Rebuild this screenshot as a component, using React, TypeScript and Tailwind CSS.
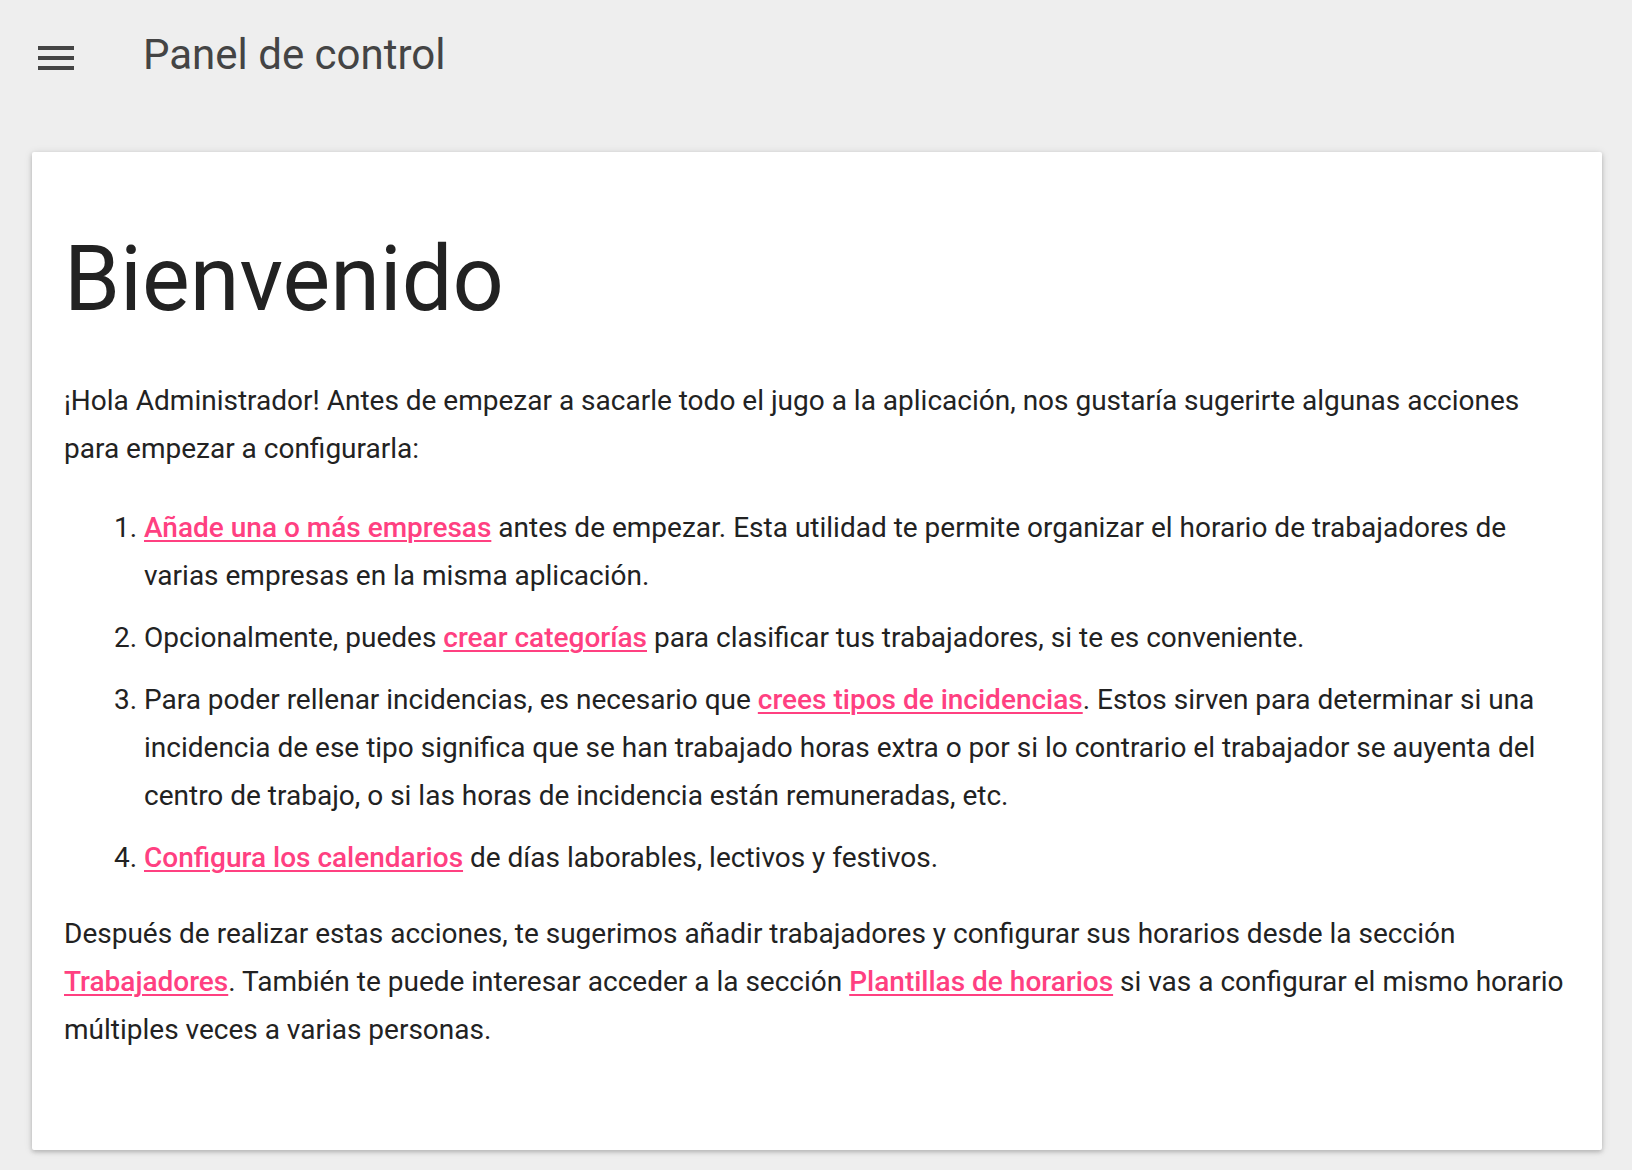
import React from 'react';

const Link = ({ children }: { children: React.ReactNode }) => (
    <a href="#" className="text-[#ff4081] font-medium underline decoration-2 underline-offset-[3px]">
        {children}
    </a>
);

export default function App() {
    return (
        <div className="min-h-[1170px] bg-[#eeeeee] pb-[21px] font-['Roboto',sans-serif] text-[#222222]">
            {/* Top bar */}
            <header className="flex items-start pl-[32px] pt-[31px] h-[152px]">
                <button className="mt-[3px] w-[48px] h-[48px] flex items-center justify-center text-[#444444]">
                    <svg width="48" height="48" viewBox="0 0 48 48" fill="currentColor">
                        <rect x="6" y="12" width="36" height="4" />
                        <rect x="6" y="22" width="36" height="4" />
                        <rect x="6" y="32" width="36" height="4" />
                    </svg>
                </button>
                <h1 className="ml-[63px] text-[42px] leading-[48px] font-normal text-[#444444]">Panel de control</h1>
            </header>

            {/* Welcome card */}
            <main className="ml-[32px] mr-[30px] bg-white rounded-[2px] shadow-[0_2px_4px_rgba(0,0,0,0.18),0_1px_8px_rgba(0,0,0,0.12)] px-[32px] pt-[72px] pb-[96px]">
                <h2 className="text-[90px] leading-[112px] font-normal">Bienvenido</h2>

                <div className="mt-[41px] text-[28px] leading-[48px]">
                    <p>
                        ¡Hola Administrador! Antes de empezar a sacarle todo el jugo a la aplicación, nos gustaría sugerirte algunas acciones para empezar a configurarla:
                    </p>

                    <ol className="list-decimal pl-[80px] mt-[31px] mb-[28px] flex flex-col gap-[14px]">
                        <li>
                            <Link>Añade una o más empresas</Link> antes de empezar. Esta utilidad te permite organizar el horario de trabajadores de varias empresas en la misma aplicación.
                        </li>
                        <li>
                            Opcionalmente, puedes <Link>crear categorías</Link> para clasificar tus trabajadores, si te es conveniente.
                        </li>
                        <li>
                            Para poder rellenar incidencias, es necesario que <Link>crees tipos de incidencias</Link>. Estos sirven para determinar si una incidencia de ese tipo significa que se han trabajado horas extra o por si lo contrario el trabajador se auyenta del centro de trabajo, o si las horas de incidencia están remuneradas, etc.
                        </li>
                        <li>
                            <Link>Configura los calendarios</Link> de días laborables, lectivos y festivos.
                        </li>
                    </ol>

                    <p>
                        Después de realizar estas acciones, te sugerimos añadir trabajadores y configurar sus horarios desde la sección <Link>Trabajadores</Link>. También te puede interesar acceder a la sección <Link>Plantillas de horarios</Link> si vas a configurar el mismo horario múltiples veces a varias personas.
                    </p>
                </div>
            </main>
        </div>
    );
}
